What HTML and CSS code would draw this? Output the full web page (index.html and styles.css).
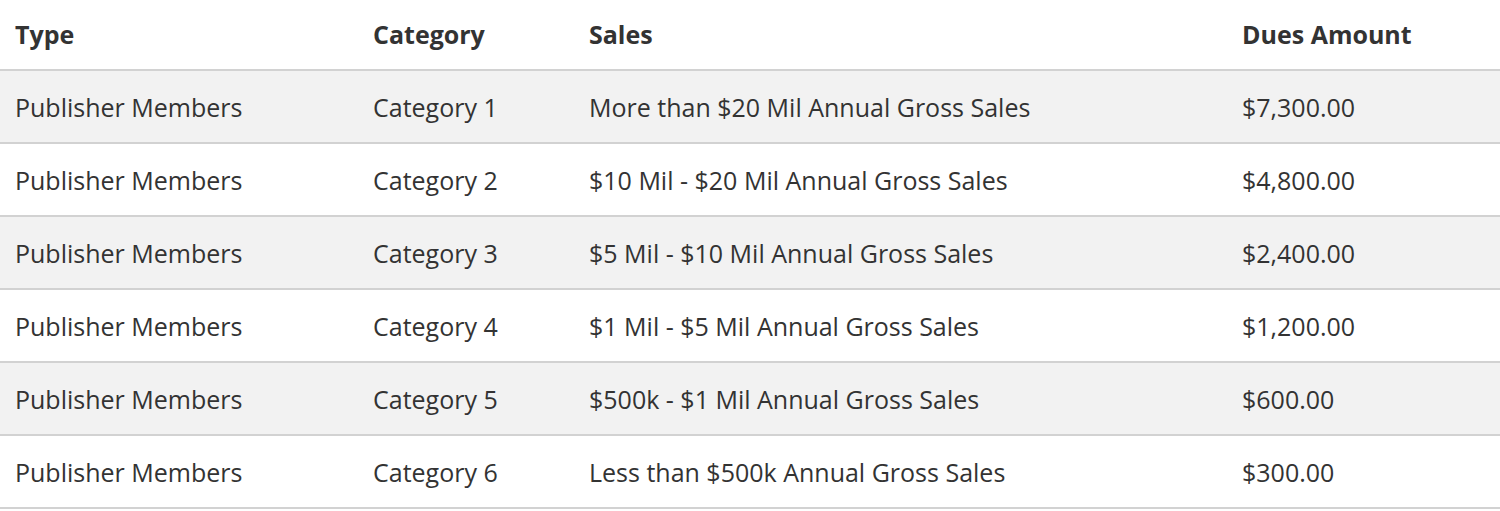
FILE: index.html
```html
<!DOCTYPE html>
<html>
<head>
<meta charset="utf-8">
<link rel="stylesheet" href="styles.css">
</head>
<body>
<table class="dues">
  <colgroup>
    <col class="c-type"><col class="c-cat"><col class="c-sales"><col class="c-amt">
  </colgroup>
  <thead>
    <tr><th>Type</th><th>Category</th><th>Sales</th><th>Dues Amount</th></tr>
  </thead>
  <tbody>
    <tr><td>Publisher Members</td><td>Category 1</td><td>More than $20 Mil Annual Gross Sales</td><td>$7,300.00</td></tr>
    <tr><td>Publisher Members</td><td>Category 2</td><td>$10 Mil - $20 Mil Annual Gross Sales</td><td>$4,800.00</td></tr>
    <tr><td>Publisher Members</td><td>Category 3</td><td>$5 Mil - $10 Mil Annual Gross Sales</td><td>$2,400.00</td></tr>
    <tr><td>Publisher Members</td><td>Category 4</td><td>$1 Mil - $5 Mil Annual Gross Sales</td><td>$1,200.00</td></tr>
    <tr><td>Publisher Members</td><td>Category 5</td><td>$500k - $1 Mil Annual Gross Sales</td><td>$600.00</td></tr>
    <tr><td>Publisher Members</td><td>Category 6</td><td>Less than $500k Annual Gross Sales</td><td>$300.00</td></tr>
  </tbody>
</table>
</body>
</html>
```
FILE: styles.css
```css
html, body {
  margin: 0;
  padding: 0;
  background: #fff;
}
body {
  font-family: "Open Sans", "Liberation Sans", sans-serif;
  color: #333;
  font-size: 25px;
}
.dues {
  width: 1500px;
  border-collapse: collapse;
  table-layout: fixed;
}
.c-type { width: 358px; }
.c-cat { width: 216px; }
.c-sales { width: 653px; }
.c-amt { width: 273px; }
.dues th {
  text-align: left;
  font-weight: 700;
  height: 70px;
  padding: 0 15px 2px;
  box-sizing: border-box;
  vertical-align: middle;
  border-bottom: 2px solid #d2d2d2;
}
.dues td {
  height: 73px;
  padding: 0 15px;
  box-sizing: border-box;
  vertical-align: middle;
  border-bottom: 2px solid #d2d2d2;
}
.dues tbody tr:nth-child(odd) td {
  background: #f2f2f2;
}
```
